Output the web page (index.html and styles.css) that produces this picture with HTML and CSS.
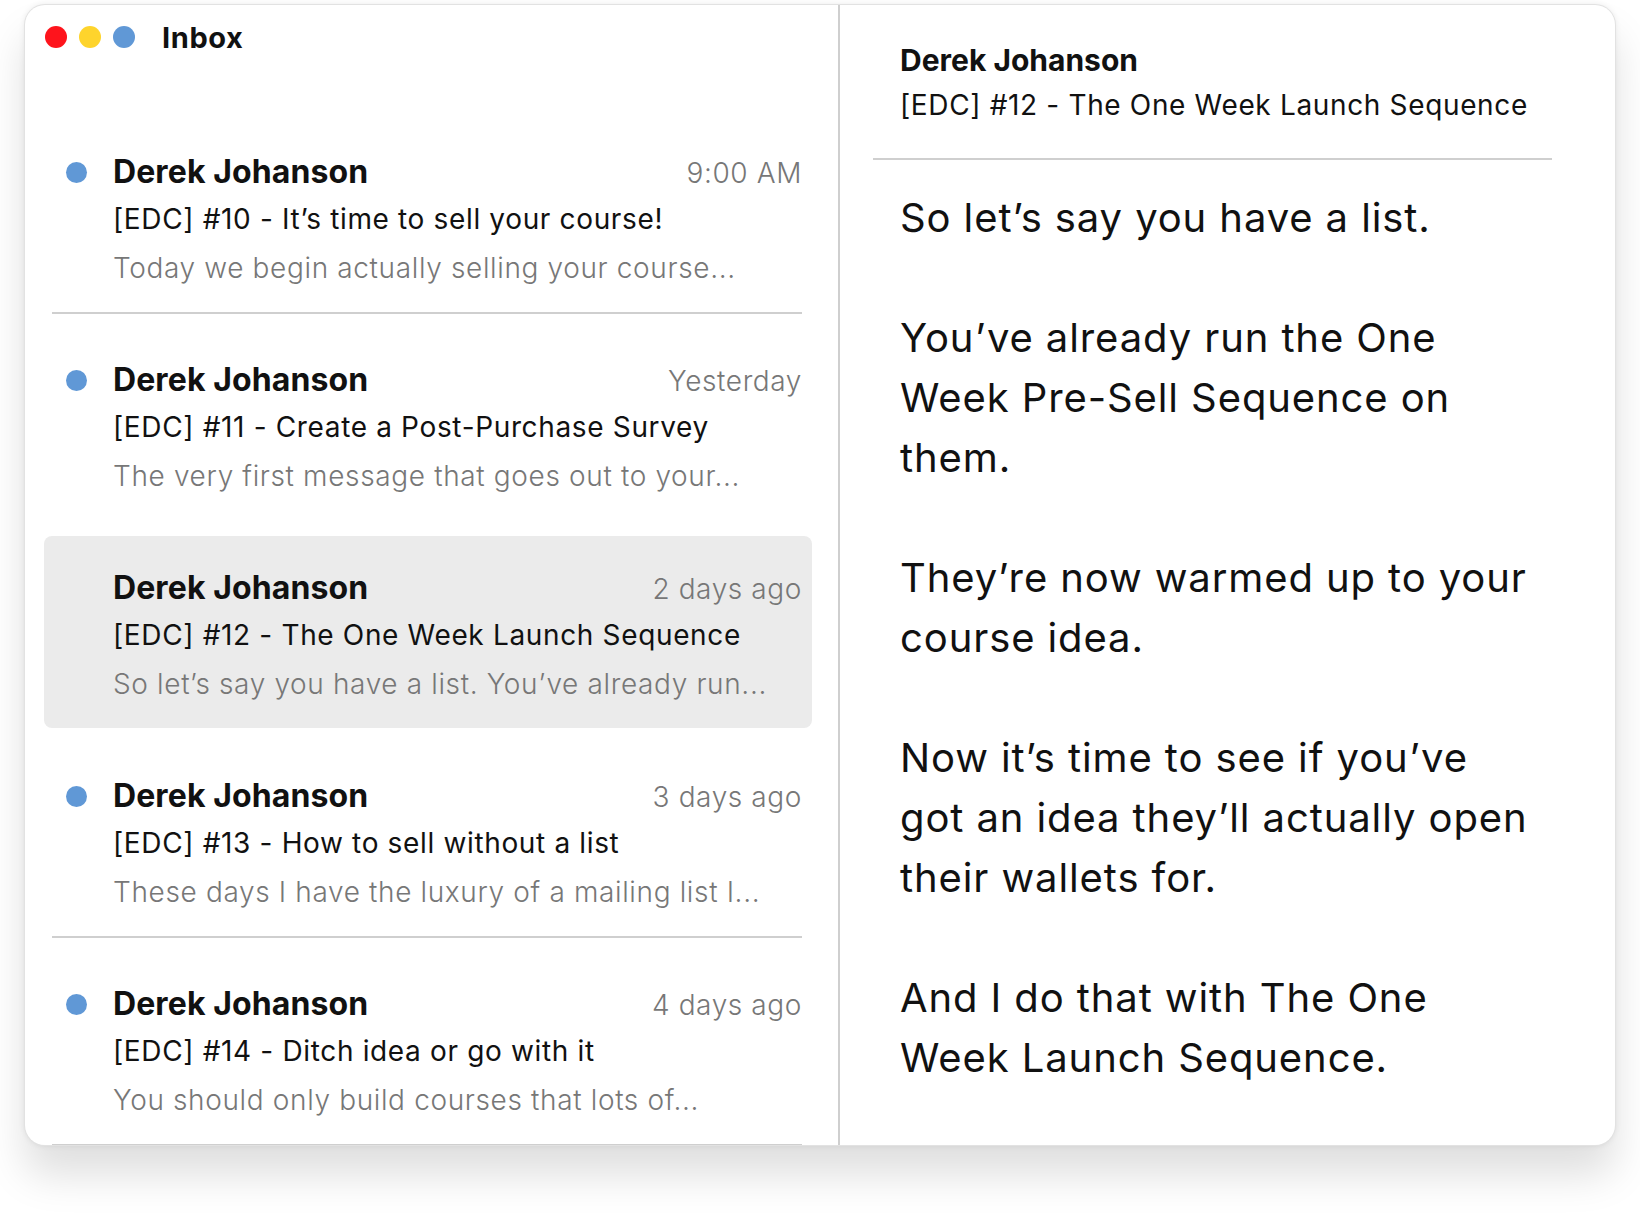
FILE: index.html
```html
<!DOCTYPE html>
<html>

<head>
    <title>Inbox</title>
    <link rel="stylesheet" href="styles.css">
</head>

<body>
    <div class="window">
        <div class="inbox">
            <div class="inbox-header">
                <span class="light red"></span>
                <span class="light yellow"></span>
                <span class="light blue"></span>
                <h1>Inbox</h1>
            </div>

            <div class="item unread">
                <span class="dot"></span>
                <div class="item-body">
                    <div class="item-top">
                        <span class="from">Derek Johanson</span>
                        <span class="time">9:00 AM</span>
                    </div>
                    <div class="subject">[EDC] #10 - It’s time to sell your course!</div>
                    <div class="preview">Today we begin actually selling your course...</div>
                </div>
            </div>

            <div class="item unread no-line">
                <span class="dot"></span>
                <div class="item-body">
                    <div class="item-top">
                        <span class="from">Derek Johanson</span>
                        <span class="time">Yesterday</span>
                    </div>
                    <div class="subject">[EDC] #11 - Create a Post-Purchase Survey</div>
                    <div class="preview">The very first message that goes out to your...</div>
                </div>
            </div>

            <div class="item selected">
                <span class="dot"></span>
                <div class="item-body">
                    <div class="item-top">
                        <span class="from">Derek Johanson</span>
                        <span class="time">2 days ago</span>
                    </div>
                    <div class="subject">[EDC] #12 - The One Week Launch Sequence</div>
                    <div class="preview">So let’s say you have a list. You’ve already run...</div>
                </div>
            </div>

            <div class="item unread">
                <span class="dot"></span>
                <div class="item-body">
                    <div class="item-top">
                        <span class="from">Derek Johanson</span>
                        <span class="time">3 days ago</span>
                    </div>
                    <div class="subject">[EDC] #13 - How to sell without a list</div>
                    <div class="preview">These days I have the luxury of a mailing list I...</div>
                </div>
            </div>

            <div class="item unread">
                <span class="dot"></span>
                <div class="item-body">
                    <div class="item-top">
                        <span class="from">Derek Johanson</span>
                        <span class="time">4 days ago</span>
                    </div>
                    <div class="subject">[EDC] #14 - Ditch idea or go with it</div>
                    <div class="preview">You should only build courses that lots of...</div>
                </div>
            </div>
        </div>

        <div class="message">
            <div class="message-header">
                <div class="message-from">Derek Johanson</div>
                <div class="subject">[EDC] #12 - The One Week Launch Sequence</div>
            </div>
            <div class="message-body">
                <p>So let’s say you have a list.</p>
                <p>You’ve already run the One<br>Week Pre-Sell Sequence on<br>them.</p>
                <p>They’re now warmed up to your<br>course idea.</p>
                <p>Now it’s time to see if you’ve<br>got an idea they’ll actually open<br>their wallets for.</p>
                <p>And I do that with The One<br>Week Launch Sequence.</p>
            </div>
        </div>
    </div>
</body>

</html>
```

FILE: styles.css
```css
body {
    margin: 0;
    min-height: 1232px;
    padding-top: 5px;
    box-sizing: border-box;
    background: #fff;
    font-family: Inter, "Noto Sans", sans-serif;
    color: #111;
}

.window {
    display: flex;
    width: 1590px;
    height: 1140px;
    margin-left: 25px;
    border-radius: 20px;
    overflow: hidden;
    background: #fff;
    box-shadow: 0 0 0 1px #e2e2e2, 0 30px 42px rgba(0, 0, 0, 0.13), 0 0 6px rgba(0, 0, 0, 0.1);
}

/* left column */

.inbox {
    width: 813px;
    flex-shrink: 0;
    border-right: 2px solid #cfcfcf;
}

.inbox-header {
    display: flex;
    align-items: flex-start;
    height: 101px;
    box-sizing: border-box;
    padding: 21px 0 0 20px;
}

.light {
    width: 22px;
    height: 22px;
    border-radius: 50%;
    margin-right: 12px;
}

.red {
    background: #fe141c;
}

.yellow {
    background: #fed42c;
}

.blue {
    background: #6098d6;
}

.inbox-header h1 {
    margin: 0 0 0 15px;
    font-size: 29px;
    line-height: 24px;
    font-weight: 700;
    letter-spacing: 0.6px;
}

.item {
    display: flex;
    height: 208px;
    box-sizing: border-box;
    margin: 0 36px 0 27px;
    padding-top: 48px;
    border-bottom: 2px solid #cfcfcf;
}

.item.no-line {
    border-bottom-color: transparent;
}

.item.selected {
    height: 192px;
    margin: 14px 26px 2px 19px;
    padding: 34px 10px 0 8px;
    border: none;
    border-radius: 8px;
    background: #ebebeb;
}

.dot {
    flex-shrink: 0;
    width: 21px;
    height: 21px;
    margin: 8px 26px 0 14px;
    border-radius: 50%;
}

.unread .dot {
    background: #6098d6;
}

.item-body {
    flex: 1;
}

.item-top {
    display: flex;
    justify-content: space-between;
    align-items: baseline;
    line-height: 36px;
}

.from {
    font-size: 32px;
    font-weight: 700;
    letter-spacing: 0.1px;
}

.time {
    font-size: 28px;
    font-weight: 300;
    letter-spacing: 0.6px;
    color: #777;
}

.subject {
    margin-top: 5px;
    font-size: 28px;
    line-height: 46px;
    letter-spacing: 0.65px;
}

.preview {
    margin-top: 3px;
    font-size: 28px;
    line-height: 46px;
    font-weight: 300;
    letter-spacing: 0.64px;
    color: #777;
}

/* right column */

.message {
    flex: 1;
}

.message-header {
    margin: 0 63px 0 33px;
    padding: 35px 0 31px 27px;
    border-bottom: 2px solid #cfcfcf;
}

.message-from {
    font-size: 30px;
    font-weight: 700;
    line-height: 40px;
}

.message-header .subject {
    margin-top: 3px;
    line-height: 44px;
}

.message-body {
    padding: 28px 30px 0 60px;
}

.message-body p {
    margin: 0 0 60px;
    font-size: 40px;
    line-height: 60px;
    letter-spacing: 0.9px;
}
```
